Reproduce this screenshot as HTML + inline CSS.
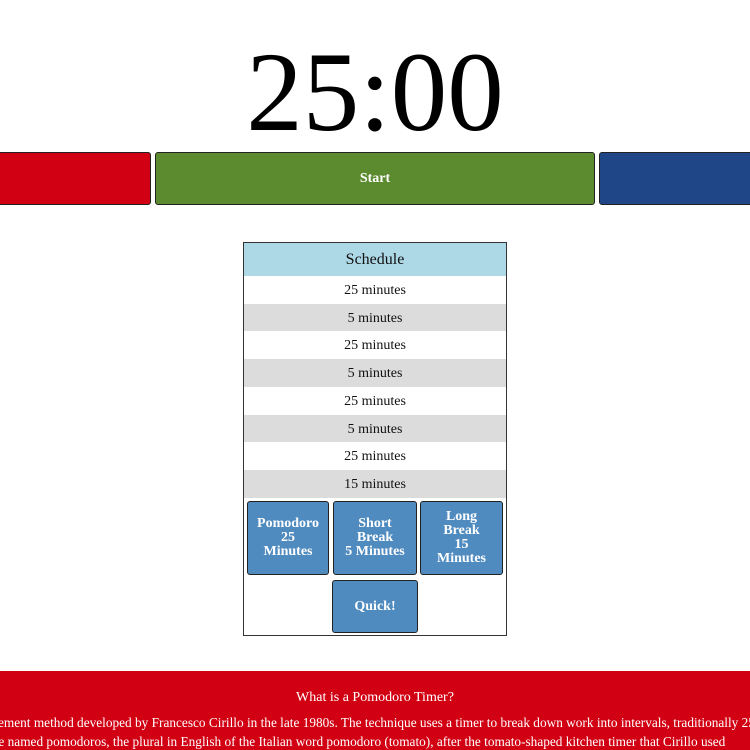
<!DOCTYPE html>
<html><head><style>
body{margin:0;width:750px;height:750px;overflow:hidden;position:relative;background:#fff;font-family:"Liberation Serif",serif;}
.a{position:absolute;}
.timer{left:0;width:750px;text-align:center;top:28px;font-size:113px;line-height:130px;color:#000;}
.btn{position:absolute;top:152px;height:53px;border:1px solid #222;border-radius:3px;box-sizing:border-box;color:#fff;font-weight:bold;font-size:14px;text-align:center;line-height:52px;}
.tbl{left:243px;top:242px;width:264px;height:394px;border:1px solid #333;box-sizing:border-box;}
.hd{position:absolute;left:0;top:0;width:262px;height:33px;background:#add8e6;text-align:center;line-height:33px;font-size:16px;color:#111;}
.row{position:absolute;left:0;width:262px;height:27.7px;text-align:center;line-height:30px;font-size:14px;color:#111;}
.g{background:#dcdcdc;}
.sb{position:absolute;background:#4f8bbf;border:1px solid #222;border-radius:3px;box-sizing:border-box;color:#fff;font-weight:bold;font-size:14px;line-height:14px;display:flex;align-items:center;justify-content:center;text-align:center;}
.foot{left:0;top:671px;width:750px;height:79px;background:#d10012;color:#fff;overflow:hidden;}
.ln{position:absolute;white-space:nowrap;font-size:14px;transform-origin:0 0;transform:scaleX(0.95);}
</style></head><body>
<div class="a timer">25:00</div>
<div class="btn" style="left:-10px;width:161px;background:#d10012"></div>
<div class="btn" style="left:155px;width:440px;background:#5b8a2f">Start</div>
<div class="btn" style="left:599px;width:170px;background:#1f4788"></div>
<div class="a tbl">
<div class="hd">Schedule</div>
<div class="row" style="top:33px">25 minutes</div>
<div class="row g" style="top:60.7px">5 minutes</div>
<div class="row" style="top:88.4px">25 minutes</div>
<div class="row g" style="top:116.1px">5 minutes</div>
<div class="row" style="top:143.8px">25 minutes</div>
<div class="row g" style="top:171.5px">5 minutes</div>
<div class="row" style="top:199.2px">25 minutes</div>
<div class="row g" style="top:226.9px">15 minutes</div>
<div class="sb" style="left:3px;top:258px;width:82px;height:74px">Pomodoro<br>25<br>Minutes</div>
<div class="sb" style="left:89px;top:258px;width:84px;height:74px">Short<br>Break<br>5 Minutes</div>
<div class="sb" style="left:176px;top:258px;width:83px;height:74px">Long<br>Break<br>15<br>Minutes</div>
<div class="sb" style="left:88px;top:337px;width:86px;height:53px">Quick!</div>
</div>
<div class="a foot">
<div style="position:absolute;left:0;width:750px;top:19px;text-align:center;font-size:14px;">What is a Pomodoro Timer?</div>
<div class="ln" style="left:-2px;top:45px">ement method developed by Francesco Cirillo in the late 1980s. The technique uses a timer to break down work into intervals, traditionally 25 minutes</div>
<div class="ln" style="left:-6px;top:64px">re named pomodoros, the plural in English of the Italian word pomodoro (tomato), after the tomato-shaped kitchen timer that Cirillo used</div>
</div>
</body></html>
